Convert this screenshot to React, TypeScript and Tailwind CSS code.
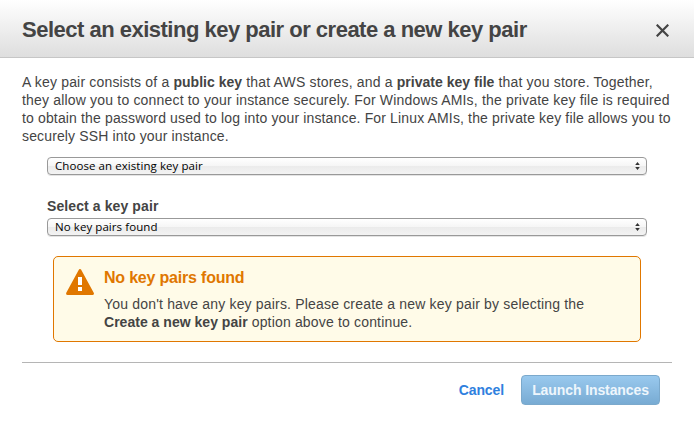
import type { ReactNode } from "react";

const Line = ({ className = "", children }: { className?: string; children: ReactNode }) => (
  <span className={`block whitespace-nowrap ${className}`}>{children}</span>
);

const Strong = ({ children }: { children: ReactNode }) => <b className="tracking-[0.02px]">{children}</b>;

function SelectBox({ text }: { text: string }) {
  return (
    <button
      type="button"
      className="flex h-[18px] w-[600px] items-center justify-between rounded-[4px] border border-[#999] bg-[linear-gradient(#fff_0%,#f6f6f6_48%,#ebebeb_52%,#f3f3f3_100%)] pl-[7px] pr-[6px] font-['Open_Sans','Noto_Sans',sans-serif] text-[11.5px] leading-4 font-medium text-black shadow-[0_1px_0_#e4e4e4]"
    >
      <span className="whitespace-nowrap tracking-[0.07px]">{text}</span>
      <svg width="5" height="8" viewBox="0 0 5 8" fill="#333">
        <path d="M2.5 0 L4.8 3 H0.2Z M0.2 5 H4.8 L2.5 8Z" />
      </svg>
    </button>
  );
}

export default function App() {
  return (
    <div className="flex h-[425px] w-[694px] flex-col bg-white font-['Liberation_Sans',Arial,sans-serif] text-[14px] leading-[18px] text-[#444]">
      <header className="flex h-[58px] shrink-0 items-center justify-between border-b border-[#c6c6c6] bg-linear-to-b from-white to-[#dedede] pl-[22px] pr-[25px]">
        <h1 className="whitespace-nowrap pt-[3px] text-[22px] leading-[28px] font-bold tracking-[-0.5px]">
          Select an existing key pair or create a new key pair
        </h1>
        <button type="button" aria-label="Close" className="mt-[4px]">
          <svg width="13" height="13" viewBox="0 0 13 13" fill="none" stroke="#444" strokeWidth="2.2">
            <path d="M0.7 0.7 L12.3 12.3 M12.3 0.7 L0.7 12.3" />
          </svg>
        </button>
      </header>

      <main className="px-[22px] pt-[15px]">
        <p>
          <Line className="tracking-[0.175px]">
            A key pair consists of a <Strong>public key</Strong> that AWS stores, and a <Strong>private key file</Strong> that you store. Together,
          </Line>
          <Line className="tracking-[0.18px]">they allow you to connect to your instance securely. For Windows AMIs, the private key file is required</Line>
          <Line className="tracking-[0.145px]">to obtain the password used to log into your instance. For Linux AMIs, the private key file allows you to</Line>
          <Line className="tracking-[0.14px]">securely SSH into your instance.</Line>
        </p>

        <div className="flex flex-col pl-[25px] pt-[12px]">
          <SelectBox text="Choose an existing key pair" />
          <label className="mt-[22px] mb-[3px] self-start whitespace-nowrap font-bold tracking-[0.1px]">Select a key pair</label>
          <SelectBox text="No key pairs found" />
        </div>

        <section className="ml-[31px] mt-[20px] flex h-[86px] w-[588px] rounded-[5px] border border-[#e07700] bg-[#fffbe8] pl-[12px] pt-[11px]">
          <svg className="mt-px shrink-0" width="28" height="26" viewBox="0 0 28 26">
            <path d="M14 1.6 L26.4 24.5 H1.6Z" fill="#e07700" stroke="#e07700" strokeWidth="3" strokeLinejoin="round" />
            <path d="M12 8h4v8h-4zM12 18h4v4h-4z" fill="#fff" />
          </svg>
          <div className="pl-[10px]">
            <h2 className="mb-[7px] text-[16px] leading-5 font-bold text-[#e07700]">
              <Line className="tracking-[-0.2px]">No key pairs found</Line>
            </h2>
            <p>
              <Line className="tracking-[0.18px]">You don't have any key pairs. Please create a new key pair by selecting the</Line>
              <Line className="tracking-[0.17px]">
                <Strong>Create a new key pair</Strong> option above to continue.
              </Line>
            </p>
          </div>
        </section>
      </main>

      <footer className="mx-[22px] mt-[20px] flex items-start justify-end border-t border-[#b5b5b5] pt-[12px] pr-[12px] font-bold tracking-[-0.1px]">
        <a className="mt-[6px] mr-[17px] whitespace-nowrap text-[#2f80de]">Cancel</a>
        <button
          type="button"
          className="h-[30px] w-[139px] whitespace-nowrap rounded-[4px] border border-[#7ba9cc] bg-linear-to-b from-[#99c9ee] to-[#78abd3] text-[#eef6fc]"
        >
          Launch Instances
        </button>
      </footer>
    </div>
  );
}
